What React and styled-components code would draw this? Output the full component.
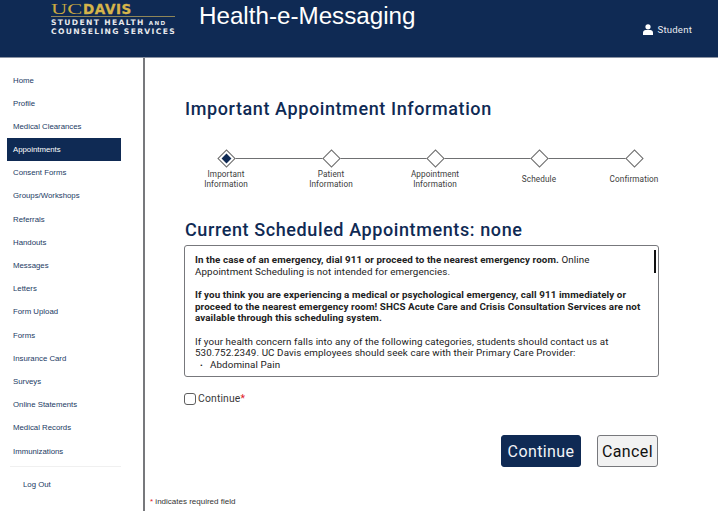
import React from "react";
import styled, { createGlobalStyle } from "styled-components";

const navy = "#0f2a54";

const GlobalStyle = createGlobalStyle`
  html, body {
    margin: 0;
    padding: 0;
    background: #fff;
  }
  body {
    font-family: Roboto, "Liberation Sans", sans-serif;
    overflow: hidden;
  }
`;

const Page = styled.div`
  width: 718px;
  height: 511px;
  display: flex;
  flex-direction: column;
  overflow: hidden;
`;

const Header = styled.header`
  height: 57px;
  flex: none;
  background: ${navy};
  border-bottom: 1px solid #8b93a3;
  display: flex;
  box-sizing: content-box;
`;

const Logo = styled.div`
  width: 124px;
  margin: 3px 0 0 51px;
  display: flex;
  flex-direction: column;
`;

const LogoMark = styled.div`
  display: flex;
  align-items: baseline;
  height: 13px;
  line-height: 13px;
  border-bottom: 1px solid #8f8658;
`;

const LogoUc = styled.span`
  display: inline-block;
  width: 32px;
  font-family: "Liberation Serif", serif;
  font-size: 15px;
  color: #c9a93f;
  transform: scaleX(1.5);
  transform-origin: left center;
`;

const LogoDavis = styled.span`
  font-family: "DejaVu Sans", sans-serif;
  font-weight: 700;
  font-size: 13.5px;
  letter-spacing: 0.6px;
  color: #d5b54a;
  -webkit-text-stroke: 0.3px #d5b54a;
`;

const LogoLine = styled.div`
  font-family: "DejaVu Sans", sans-serif;
  font-weight: 700;
  font-size: 7.6px;
  line-height: 7.5px;
  letter-spacing: 1.34px;
  color: #e6e8ec;
  white-space: nowrap;
`;

const LogoLines = styled.div`
  margin-top: 2px;
`;

const SmallCaps = styled.span`
  font-size: 5.6px;
`;

const Title = styled.h1`
  margin: 0 0 0 24px;
  padding-top: 2px;
  font-family: "Liberation Sans", sans-serif;
  font-weight: 400;
  font-size: 24.2px;
  line-height: 28px;
  color: #fff;
`;

const UserBox = styled.div`
  margin-left: auto;
  padding: 23px 26px 0 0;
  display: flex;
  align-items: flex-start;
  gap: 5px;
  height: 14px;
  font-size: 9.6px;
  line-height: 14px;
  letter-spacing: 0.2px;
  color: #e8ebf0;
`;

const Body = styled.div`
  flex: 1;
  display: flex;
  min-height: 0;
`;

const Sidebar = styled.nav`
  width: 145px;
  flex: none;
  box-sizing: border-box;
  border-right: 2px solid #77787c;
  padding: 10.5px 22px 0 7px;
`;

const NavItem = styled.div`
  height: 23.2px;
  line-height: 23px;
  padding-left: 6px;
  font-family: "Liberation Sans", sans-serif;
  font-size: 7.8px;
  color: ${(p) => (p.$active ? "#fff" : "#213a63")};
  background: ${(p) => (p.$active ? navy : "transparent")};
`;

const Logout = styled.div`
  margin: 3px 0 0 3px;
  border-top: 1px solid #f0f0f0;
  padding: 12px 0 0 13px;
  font-family: "Liberation Sans", sans-serif;
  font-size: 7.8px;
  line-height: 12px;
  color: #213a63;
`;

const Main = styled.main`
  flex: 1;
  min-width: 0;
  padding: 0 0 0 39px;
  display: flex;
  flex-direction: column;
`;

const Heading = styled.h2`
  margin: 0 0 0 1px;
  font-weight: 500;
  font-size: 18px;
  letter-spacing: 0.6px;
  line-height: 24px;
  color: ${navy};
`;

const PageHeading = styled(Heading)`
  margin-top: 39px;
`;

const SectionHeading = styled(Heading)`
  margin-top: 12px;
`;

const Stepper = styled.ol`
  list-style: none;
  margin: 28px 0 0 2px;
  padding: 0;
  height: 57px;
  display: flex;
`;

const Step = styled.li`
  position: relative;
  width: 80px;
  flex: none;
  margin-left: ${(p) => p.$gap}px;
  display: flex;
  flex-direction: column;
  align-items: center;
  &::before {
    content: "";
    display: ${(p) => (p.$first ? "none" : "block")};
    position: absolute;
    top: 9px;
    right: 50%;
    width: ${(p) => p.$gap + 80}px;
    height: 1px;
    background: #6f7072;
  }
`;

const Diamond = styled.span`
  position: relative;
  z-index: 1;
  width: 13px;
  height: 13px;
  margin-top: 3px;
  flex: none;
  box-sizing: border-box;
  transform: rotate(45deg);
  border: 1px solid #6b6b6b;
  background: #fff;
  display: flex;
  align-items: center;
  justify-content: center;
  &::after {
    content: "";
    display: ${(p) => (p.$current ? "block" : "none")};
    width: 7px;
    height: 7px;
    background: ${navy};
  }
`;

const StepLabel = styled.span`
  margin-top: 5px;
  min-height: 19px;
  display: flex;
  flex-direction: column;
  justify-content: center;
  font-size: 8.2px;
  line-height: 9.5px;
  letter-spacing: 0.1px;
  text-align: center;
  color: #3c3c3c;
`;

const InfoBox = styled.div`
  position: relative;
  margin-top: 3px;
  width: 475px;
  height: 132px;
  box-sizing: border-box;
  border: 1px solid #77787c;
  border-radius: 3px;
  padding: 8px 13px 0 10px;
  overflow: hidden;
  font-size: 9.8px;
  line-height: 11.65px;
  letter-spacing: 0.1px;
  color: #222;
`;

const Para = styled.p`
  margin: 0 0 11.65px;
`;

const Bullets = styled.ul`
  margin: -11.65px 0 0;
  padding: 0 0 0 5px;
  list-style: none;
`;

const Bullet = styled.li`
  &::before {
    content: "•";
    display: inline-block;
    width: 10px;
    font-size: 8px;
  }
`;

const ScrollThumb = styled.span`
  position: absolute;
  top: 4px;
  right: 2px;
  width: 2px;
  height: 23px;
  background: #111;
`;

const ConsentRow = styled.label`
  margin-top: 15px;
  display: flex;
  align-items: center;
  gap: 2px;
  height: 13px;
  font-size: 10.4px;
  letter-spacing: 0.15px;
  color: #3a3a3a;
`;

const CheckBox = styled.span`
  width: 12px;
  height: 12px;
  box-sizing: border-box;
  border: 1px solid #5f5f5f;
  border-radius: 3px;
  background: #fff;
`;

const Required = styled.span`
  color: #e0202a;
`;

const Actions = styled.div`
  margin-top: 30px;
  width: 474px;
  display: flex;
  justify-content: flex-end;
  align-items: center;
  gap: 16px;
`;

const Button = styled.button`
  width: ${(p) => p.$width}px;
  height: 32px;
  padding: 0;
  box-sizing: border-box;
  border-radius: 3px;
  border: 1px solid ${(p) => (p.$primary ? navy : "#77787c")};
  background: ${(p) => (p.$primary ? navy : "#f2f2f2")};
  color: ${(p) => (p.$primary ? "#f2f4f7" : "#111")};
  font-family: Roboto, sans-serif;
  font-size: 16px;
  letter-spacing: 0.4px;
`;

const Footnote = styled.div`
  margin: 29px 0 0 -34px;
  font-family: "Liberation Sans", sans-serif;
  font-size: 8px;
  line-height: 12px;
  color: #333;
`;

const navItems = [
  "Home",
  "Profile",
  "Medical Clearances",
  "Appointments",
  "Consent Forms",
  "Groups/Workshops",
  "Referrals",
  "Handouts",
  "Messages",
  "Letters",
  "Form Upload",
  "Forms",
  "Insurance Card",
  "Surveys",
  "Online Statements",
  "Medical Records",
  "Immunizations",
];

const steps = [
  { label: ["Important", "Information"], gap: 0, current: true },
  { label: ["Patient", "Information"], gap: 25 },
  { label: ["Appointment", "Information"], gap: 24 },
  { label: ["Schedule"], gap: 24 },
  { label: ["Confirmation"], gap: 15 },
];

const UserIcon = () => (
  <svg width="10" height="11" viewBox="0 0 10 11" fill="#fff" style={{ marginTop: 1 }}>
    <circle cx="5" cy="2.8" r="2.6" />
    <path d="M0 11V8.8C0 7 1.4 6 2.6 6h4.8C8.6 6 10 7 10 8.8V11z" />
  </svg>
);

export default function App() {
  return (
    <Page>
      <GlobalStyle />
      <Header>
        <Logo>
          <LogoMark>
            <LogoUc>UC</LogoUc>
            <LogoDavis>DAVIS</LogoDavis>
          </LogoMark>
          <LogoLines>
            <LogoLine>
              STUDENT HEALTH <SmallCaps>AND</SmallCaps>
            </LogoLine>
            <LogoLine>COUNSELING SERVICES</LogoLine>
          </LogoLines>
        </Logo>
        <Title>Health-e-Messaging</Title>
        <UserBox>
          <UserIcon />
          Student
        </UserBox>
      </Header>
      <Body>
        <Sidebar>
          {navItems.map((item) => (
            <NavItem key={item} $active={item === "Appointments"}>
              {item}
            </NavItem>
          ))}
          <Logout>Log Out</Logout>
        </Sidebar>
        <Main>
          <PageHeading>Important Appointment Information</PageHeading>
          <Stepper>
            {steps.map((s, i) => (
              <Step key={s.label[0]} $gap={s.gap} $first={i === 0}>
                <Diamond $current={s.current} />
                <StepLabel>
                  {s.label.map((line) => (
                    <div key={line}>{line}</div>
                  ))}
                </StepLabel>
              </Step>
            ))}
          </Stepper>
          <SectionHeading>Current Scheduled Appointments: none</SectionHeading>
          <InfoBox>
            <Para>
              <b>In the case of an emergency, dial 911 or proceed to the nearest emergency room.</b>{" "}
              Online Appointment Scheduling is not intended for emergencies.
            </Para>
            <Para>
              <b>
                If you think you are experiencing a medical or psychological emergency, call 911
                immediately or proceed to the nearest emergency room! SHCS Acute Care and Crisis
                Consultation Services are not available through this scheduling system.
              </b>
            </Para>
            <Para>
              If your health concern falls into any of the following categories, students should
              contact us at 530.752.2349. UC Davis employees should seek care with their Primary
              Care Provider:
            </Para>
            <Bullets>
              <Bullet>Abdominal Pain</Bullet>
            </Bullets>
            <ScrollThumb />
          </InfoBox>
          <ConsentRow>
            <CheckBox />
            <span>
              Continue<Required>*</Required>
            </span>
          </ConsentRow>
          <Actions>
            <Button $primary $width={80}>
              Continue
            </Button>
            <Button $width={61}>Cancel</Button>
          </Actions>
          <Footnote>
            <Required>*</Required> indicates required field
          </Footnote>
        </Main>
      </Body>
    </Page>
  );
}
